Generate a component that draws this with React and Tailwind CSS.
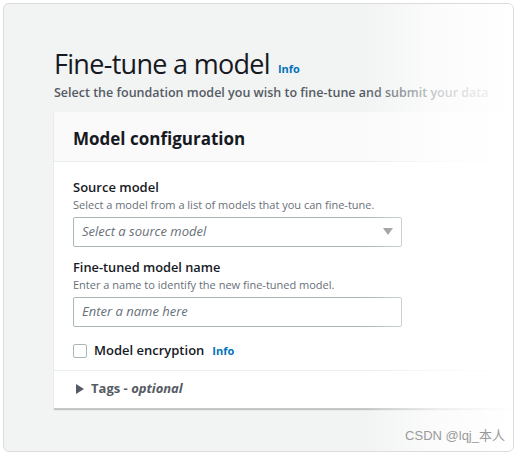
export default function App() {
  const font = { fontFamily: '"Open Sans", "Noto Sans", sans-serif' };
  return (
    <div className="w-[517px] h-[455px] bg-white p-[3px]" style={font}>
      <div className="relative w-[511px] h-[449px] rounded-[6px] border border-[#dcdcdc] bg-[#f2f3f3] overflow-hidden">
        <div className="pl-[50px] pt-[43px]">
          <div className="flex items-end gap-[8px]">
            <h1 className="text-[27px] leading-[34px] text-[#16191f] tracking-[-0.7px]">Fine-tune a model</h1>
            <span className="text-[11px] font-bold text-[#0073bb] mb-[4px]">Info</span>
          </div>
          <p className="text-[12.5px] leading-[18px] text-[#545b64] font-semibold mt-[3px] whitespace-nowrap">
            Select the foundation model you wish to fine-tune and submit your data
          </p>
          <div className="mt-[10px] w-[460px] bg-white shadow-[0_1px_1px_rgba(0,0,0,0.2)] border-b border-[#c8c8c8]">
            <div className="h-[50px] bg-[#fafafa] border-b border-[#eaeded] flex items-center pl-[19px] pt-[4px]">
              <h2 className="text-[17px] font-bold text-[#16191f]">Model configuration</h2>
            </div>
            <div className="pl-[19px] pt-[16px]">
              <div className="text-[13px] font-semibold text-[#16191f] leading-[18px]">Source model</div>
              <div className="text-[11px] text-[#687078] leading-[16px] mt-[1px]">Select a model from a list of models that you can fine-tune.</div>
              <div className="mt-[4px] w-[329px] h-[30px] border border-[#aab7b8] rounded-[2px] flex items-center justify-between px-[8px]">
                <span className="italic text-[13px] text-[#687078]">Select a source model</span>
                <svg width="10" height="8" viewBox="0 0 10 8"><path d="M0 0 H10 L5 7 Z" fill="#8c8c8c" /></svg>
              </div>
              <div className="text-[12.8px] font-semibold text-[#16191f] leading-[18px] mt-[11px]">Fine-tuned model name</div>
              <div className="text-[11px] text-[#687078] leading-[16px] mt-[1px]">Enter a name to identify the new fine-tuned model.</div>
              <div className="mt-[4px] w-[329px] h-[30px] border border-[#aab7b8] rounded-[2px] flex items-center px-[8px]">
                <span className="italic text-[13px] text-[#687078]">Enter a name here</span>
              </div>
              <div className="flex items-center mt-[16px] h-[16px]">
                <div className="w-[14px] h-[14px] border border-[#aab7b8] rounded-[2px] bg-white" />
                <span className="ml-[7px] text-[13px] font-semibold text-[#16191f]">Model encryption</span>
                <span className="ml-[8px] text-[11px] font-bold text-[#0073bb]">Info</span>
              </div>
            </div>
            <div className="mt-[11px] border-t border-[#eaeded] h-[38px] flex items-center pl-[22px] pb-[2px]">
              <svg width="8" height="10" viewBox="0 0 8 10"><path d="M0 0 L8 5 L0 10 Z" fill="#545b64" /></svg>
              <span className="ml-[7px] text-[13px] font-bold text-[#545b64]">Tags - <span className="italic">optional</span></span>
            </div>
          </div>
        </div>
        <div className="absolute top-0 right-0 w-[150px] h-full bg-gradient-to-r from-[rgba(255,255,255,0)] via-[rgba(255,255,255,0.7)] to-white" />
        <div className="absolute right-[8px] bottom-[6px] text-[13px] text-[#9a9a9a]" style={{ fontFamily: '"Liberation Sans", "Noto Sans CJK SC", sans-serif' }}>CSDN @lqj_本人</div>
      </div>
    </div>
  );
}
